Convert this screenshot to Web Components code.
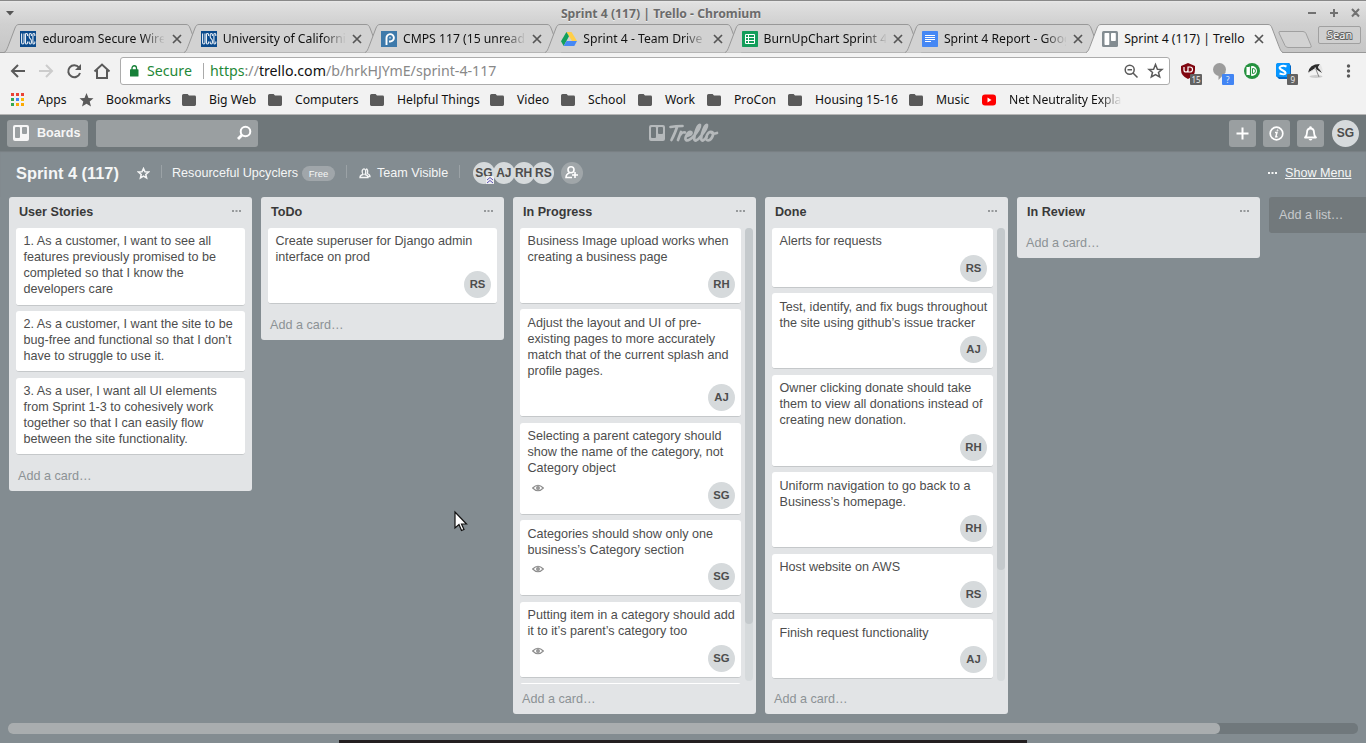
<!DOCTYPE html>
<html lang="en"><head><meta charset="utf-8"><title>Sprint 4 (117) | Trello</title>
<style>html,body{margin:0;width:1366px;height:743px;overflow:hidden;background:#838c91;font-family:"Liberation Sans",Arial,sans-serif}</style></head>
<body><desktop-window></desktop-window>
<script>
const define=(name,render)=>customElements.define(name,class extends HTMLElement{
  connectedCallback(){ if(this.shadowRoot) return;
    const t=document.createElement('template'); t.innerHTML=render(this);
    this.attachShadow({mode:'open'}).append(t.content.cloneNode(true)); }
});
const folder='<svg width="14" height="12" viewBox="0 0 14 12"><path d="M1.5 0H5.6L7 1.6H12.6A1.4 1.4 0 0 1 14 3V10.600A1.4 1.4 0 0 1 12.6 12H1.400A1.4 1.4 0 0 1 0 10.600V1.500A1.500 1.500 0 0 1 1.500 0Z" fill="#5a5a5a"/></svg>';
const ucsc='<svg width="16" height="16"><rect width="16" height="16" fill="#0a4a8c"/><g fill="none" stroke="#e8eef5" stroke-width="1.100"><path d="M1.600 2.500V11.500Q1.600 13 2.800 13T4 11.500V2.500M7.600 5V3.500Q7.600 2.500 6.500 2.500T5.500 3.500V12Q5.500 13 6.500 13T7.600 12V10.500M11.400 5V3.500Q11.400 2.500 10.300 2.500T9.200 4V5.500Q9.200 7 10.300 7.800T11.400 10V11.500Q11.400 13 10.300 13T9.200 11.500V10.500M14.800 5V3.500Q14.800 2.500 13.800 2.500T12.900 3.500V12Q12.900 13 13.800 13T14.800 12V10.500"/></g></svg>';
const favicons={ucsc,
 piazza:'<svg width="16" height="16"><rect width="16" height="16" fill="#3e7aab"/><path d="M5.500 14V7A3.700 3.700 0 1 1 9.200 10.500H8" fill="none" stroke="#fff" stroke-width="1.900"/><circle cx="9" cy="6.800" r="1" fill="#a8c9e2"/></svg>',
 drive:'<svg width="16" height="16" viewBox="0 0 16 16"><path d="M5.400 1H10.500L16 10H10.900Z" fill="#ffcf48"/><path d="M5.400 1L8 5.300L2.700 15L0 10.300Z" fill="#11a05d"/><path d="M5.500 10H16L13.300 15H2.700Z" fill="#4688f4"/></svg>',
 sheet:'<svg width="16" height="16"><rect width="16" height="16" rx=".7" fill="#129d5a"/><path d="M3.500 3.500H12.500V12.500H3.500ZM3 6.500H13M3 9.500H13M6.500 3V13" fill="none" stroke="#fff"/></svg>',
 doc:'<svg width="16" height="16"><rect width="16" height="16" rx=".7" fill="#4688f4"/><path d="M3 4.500H13M3 6.500H13M3 8.500H13M3 10.500H9" stroke="#fff"/></svg>',
 trello:'<svg width="16" height="16"><rect width="16" height="16" rx="1.500" fill="#838c91"/><rect x="2.500" y="2" width="4.800" height="12" rx=".7" fill="#fff"/><rect x="9" y="2" width="4.800" height="8" rx=".7" fill="#fff"/></svg>'};

define('browser-tab',e=>{const on=e.hasAttribute('active');return `<style>
:host{display:block;width:180.300px;height:29px;flex:none;position:relative;font:14px/20px "Noto Sans",sans-serif;color:#111}
.shape{position:absolute;left:-1px;top:0}
.row{position:relative;display:flex;height:29px;align-items:center;padding-left:15.400px}
.row>svg{flex:none}
.t{width:122px;margin-left:6px;white-space:nowrap;overflow:hidden;font-size:12.200px;padding-top:1px}
.fade{-webkit-mask:linear-gradient(90deg,#000 82%,transparent 101%);mask:linear-gradient(90deg,#000 82%,transparent 101%)}
.x{margin-left:7.500px}</style>
<svg class="shape" width="197" height="29"><path d="M0 28.500C2 28 3 25 4 22.500L11 4C12 1.500 13 .5 15 .5H182C184 .5 185 1.500 186 4L193 22.500C194 25 195 28 197 28.500" fill="${on?'#f2f2f2':'#d2d2d2'}" stroke="#989898"/>${on?'<path d="M1 28.500H196" stroke="#f2f2f2"/>':''}</svg>
<div class="row">${favicons[e.getAttribute('icon')]}<div class="t ${on?'':'fade'}"><slot></slot></div><svg class="x" width="10" height="10"><path d="M1 1L9 9M9 1L1 9" stroke="#555" stroke-width="1.700"/></svg></div>`});

define('window-title',()=>`<style>:host{display:flex;height:24px;background:linear-gradient(#888 0,#888 1px,#e8e8e8 1px,#e0e0e0 3px,#d0d0d0);align-items:center;position:relative}
span{flex:1;text-align:center;font:bold 12.200px/20px "Noto Sans",sans-serif;color:#6b6b6b;text-shadow:0 1px #eee;padding-top:3px}
svg{flex:none}</style><svg width="16" height="24"><path d="M6 11H14L10 15.500Z" fill="#555"/></svg><span>Sprint 4 (117) | Trello - Chromium</span>
<svg width="60" height="24" stroke="#717171" stroke-width="2" fill="none"><path d="M2 13H10M24 13H32M28 9V17M46 9L53 16.500M53 9L46 16.500"/></svg>`);

define('tab-strip',()=>`<style>:host{display:flex;height:29px;background:linear-gradient(#d0d0d0,#c6c6c6);position:relative;padding-left:5px}
:host:after{content:"";position:absolute;left:0;right:0;bottom:0;height:1px;background:#989898;z-index:0}
browser-tab{z-index:1}browser-tab[active]{z-index:2}
.end{position:relative;z-index:2;display:flex;margin-left:11px}
.sean{margin:2px 0 0 6px;width:41px;height:16px;border:1px solid #a0a0a0;border-radius:2px;background:#cfcfcf;font:11px/16px "Noto Sans",sans-serif;text-align:center;color:#fafafa;-webkit-text-stroke:2px #666;paint-order:stroke fill}</style>
<browser-tab icon="ucsc">eduroam Secure Wirele</browser-tab><browser-tab icon="ucsc">University of California</browser-tab><browser-tab icon="piazza">CMPS 117 (15 unread)</browser-tab><browser-tab icon="drive">Sprint 4 - Team Drive</browser-tab><browser-tab icon="sheet">BurnUpChart Sprint 4</browser-tab><browser-tab icon="doc">Sprint 4 Report - Goog</browser-tab><browser-tab icon="trello" active>Sprint 4 (117) | Trello</browser-tab>
<div class="end"><svg width="34" height="29"><path d="M2 7.500H25Q27 7.500 28 9.500L33 21.500Q34 23.500 32 23.500H10Q8 23.500 7 21.500L1 9Q.5 7.500 2 7.500Z" fill="#d2d2d2" stroke="#a0a0a0"/></svg><div class="sean">Sean</div></div>`);

define('address-bar',()=>`<style>:host{display:flex;height:35px;align-items:flex-start;padding:0 0 0 8px;box-sizing:border-box;background:#f2f2f2}
svg{flex:none;display:block}.nav{width:112px}
.url{display:flex;align-items:center;box-sizing:border-box;width:1050px;height:28px;border:1px solid #acacac;border-radius:3px;background:#fff;font:14.200px/26px "Noto Sans",sans-serif;color:#888;padding-left:9px;margin-top:4px}
.s{color:#1f8838;margin:0 10px 0 8px;width:46px;white-space:nowrap}.bar{width:1px;height:16px;background:#aaa;margin-right:6px}.u{flex:1}.u b{font-weight:400;color:#111}.u i{font-style:normal;color:#1f8838}
.ext{margin:9px 0 0 11px;font:8px "Noto Sans",sans-serif}</style>
<svg class="nav" width="112" height="35" fill="none" stroke="#5a5a5a" stroke-width="2"><path d="M17 18H4M10 12L4 18L10 24"/><path d="M31 18H44M38 12L44 18L38 24" stroke="#ccc"/><path d="M71 14.500A6 6 0 1 0 72 20"/><path d="M73 11V17H67Z" fill="#5a5a5a" stroke="none"/><path d="M86.500 18.500L94 11.500L101.500 18.500M89 17V25H99V17"/></svg>
<div class="url"><svg width="9" height="12"><rect y="4.300" width="8.500" height="7.200" rx=".6" fill="#178038"/><path d="M2 5V3A2.200 2.200 0 0 1 6.500 3V5" fill="none" stroke="#178038" stroke-width="1.300"/></svg><span class="s">Secure</span><span class="bar"></span><span class="u"><i>https</i>://<b>trello.com</b>/b/hrkHJYmE/sprint-4-117</span>
<svg width="45" height="26" fill="none" stroke="#5a5a5a" stroke-width="1.500"><circle cx="5.700" cy="11.700" r="4.500"/><path d="M9 15L13.500 19.500M3.500 11.700H8"/><path d="M31.500 6.500L33.400 11.200L38 11.400L34.500 14.400L35.700 19L31.500 16.500L27.300 19L28.500 14.400L25 11.400L29.600 11.200Z"/></svg></div>
<svg class="ext" width="180" height="25"><path d="M0 4L7 1L14 4V8Q14 14 7 17Q0 14 0 8Z" fill="#800610"/><path d="M3 5V8Q3 10 5 10T7 8V5M7 5V10H9Q11.500 10 11.500 7.500T9 5Z" stroke="#fff" fill="none" stroke-width="1.200"/><rect x="9" y="12" width="12" height="11" rx="1" fill="#626262"/><text x="10.500" y="20.500" fill="#eee">15</text>
<circle cx="38.500" cy="7.500" r="6.500" fill="#9c9c9c"/><path d="M37.500 12V18L45 10Z" fill="#9c9c9c"/><rect x="41" y="12" width="12" height="11" rx="1" fill="#4285f4"/><text x="45" y="20.500" fill="#eee">?</text>
<circle cx="71" cy="9" r="8" fill="#24913e"/><circle cx="71" cy="9" r="5" fill="#fff"/><rect x="65.500" y="5" width="4" height="8" fill="#fff"/><path d="M69.500 4V14" stroke="#24913e" stroke-width="1.200"/><path d="M71.500 6.500H72A2.500 2.500 0 0 1 72 11.500H71.500Z" fill="none" stroke="#24913e"/>
<path d="M97 1H108L110 4V17H98L95 14V3Z" fill="#0066c6"/><rect x="95" y="1" width="14" height="14" rx="2" fill="#0696ff"/><path d="M105.500 4.500Q102 3 99.500 4.500T101 8T104.500 11.500T98.500 11.500" fill="none" stroke="#fff" stroke-width="2"/><rect x="106" y="12" width="11" height="11" rx="1" fill="#626262"/><text x="109.500" y="20.500" fill="#eee">9</text>
<ellipse cx="135" cy="14.500" rx="6.500" ry="1.500" fill="#ccc"/><path d="M127 11Q128 2 139 2L137 5L141 11L134 6.500Z" fill="#2d2d2d"/><path d="M139 2Q141 4 142 10L137 6Z" fill="#e5e5e5"/><path d="M134 5L138 15" stroke="#888"/><path d="M127 11L132 8L135 6" stroke="#ddd"/>
<g fill="#5a5a5a"><circle cx="167.500" cy="4" r="1.700"/><circle cx="167.500" cy="9" r="1.700"/><circle cx="167.500" cy="14" r="1.700"/></g></svg>`);

const marks=[['apps',38,'Apps',11],['star',106,'Bookmarks',79],['',209,'Big Web',182],['',295,'Computers',268],['',397,'Helpful Things',370],['',517,'Video',490],['',588,'School',561],['',665,'Work',638],['',734,'ProCon',707],['',815,'Housing 15-16',788],['',936,'Music',909],['yt',1009,'Net Neutrality Expla',982]];
const apps='<svg width="13" height="13">'+['#ea4335','#ea4335','#ea4335','#34a853','#4285f4','#fbbc05','#34a853','#fbaa05','#fbaa05'].map((c,i)=>`<rect x="${i%3*5}" y="${Math.floor(i/3)*5}" width="3" height="3" fill="${c}"/>`).join('')+'</svg>';
define('bookmarks-bar',()=>`<style>:host{display:grid;grid-template-columns:${marks.map((m,i)=>(i<11?marks[i+1][3]-m[3]:147)+'px').join(' ')};height:27px;padding-left:11px;background:#f2f2f2;border-bottom:1px solid #b5b5b5;box-sizing:border-box;font:12.200px/18px "Noto Sans",sans-serif;color:#111}
div{display:flex;align-items:center;white-space:nowrap;padding-bottom:3px}div svg{flex:none;margin-right:auto}span{flex:none}.last span{letter-spacing:-.1px;-webkit-mask:linear-gradient(90deg,#000 76%,transparent 94%);mask:linear-gradient(90deg,#000 76%,transparent 94%)}</style>
${marks.map((m,i)=>`<div class="${m[0]=='yt'?'last':''}">${m[0]=='apps'?apps:m[0]=='star'?'<svg width="15" height="14"><path d="M7.500 0L9.500 5L14.500 5.300L10.700 8.500L12 13.500L7.500 10.800L3 13.500L4.300 8.500L.5 5.300L5.500 5Z" fill="#5a5a5a"/></svg>':m[0]=='yt'?'<svg width="15" height="12"><rect width="14" height="11" rx="3" y=".5" fill="#f00"/><path d="M5.500 3.500L9.500 6L5.500 8.500Z" fill="#fff"/></svg>':folder}<span style="width:${i<11?marks[i+1][3]-m[1]:120}px">${m[2]}</span></div>`).join('')}`);

const board='<svg width="16" height="16"><path fill-rule="evenodd" d="M2 0H14Q16 0 16 2V14Q16 16 14 16H2Q0 16 0 14V2Q0 0 2 0ZM3 2Q2 2 2 3V12Q2 13 3 13H6Q7 13 7 12V3Q7 2 6 2ZM10 2Q9 2 9 3V8Q9 9 10 9H13Q14 9 14 8V3Q14 2 13 2Z" fill="currentColor"/></svg>';
define('trello-header',()=>`<style>:host{display:flex;height:36px;box-sizing:border-box;background:#6f777a;align-items:center;padding:0 7px;color:#fff}
.b{display:flex;align-items:center;height:27px;width:81px;background:#9a9fa1;border-radius:3px;box-sizing:border-box;padding-left:6px;font:bold 12.600px/27px "Liberation Sans",Arial,sans-serif;color:#f6f6f6}.b span{margin-left:8px}.s{width:162px;height:27px;background:#9a9fa1;border-radius:3px;margin-left:8px;display:flex;align-items:center;justify-content:flex-end;box-sizing:border-box;padding-right:6px}
.logo{margin-left:391px;color:#b5b9bb;display:flex;align-items:center;margin-right:auto}.logo svg+svg{margin-left:3px}
.i{width:27px;height:27px;margin-left:7px;background:#9a9fa1;border-radius:3px}.av{width:27px;height:27px;border-radius:50%;background:#d6dadc;color:#4d4d4d;font:bold 12px/27px "Liberation Sans",Arial,sans-serif;text-align:center;margin-left:8px}.i svg{display:block}</style>
<div class="b">${board}<span>Boards</span></div><div class="s"><svg width="16" height="16" fill="none" stroke="#fff"><circle cx="9.500" cy="6.500" r="4.800" stroke-width="2"/><path d="M6 10L2 14" stroke-width="2.800"/></svg></div>
<div class="logo">${board}<svg width="51" height="23" viewBox="0 0 50 23" fill="none" stroke="currentColor" stroke-width="2.700" stroke-linecap="round" stroke-linejoin="round"><path d="M2 5Q7 4 14 4M8.500 5Q7 10 3 18"/><path d="M12.500 10L9.500 18M11.500 13Q14.500 9.500 16.500 10.500"/><path d="M18.500 14Q23.500 12.500 23 10.500Q21 8.500 18.500 12.500T17.500 18Q20 19.500 25.500 14"/><path d="M25.500 14Q32 6 31.500 3Q29.500 2 26.500 12Q24.500 19 27.500 18.500Q30 17.500 32.500 14Q39 6 38.500 3Q36.500 2 33.500 12Q31.500 19 34.500 18.500Q36 18 38 15"/><path d="M43.500 10Q40.500 9 38.500 13Q36.500 18.500 39.500 18.500Q43 18 44.500 13Q45 10 43 10Q43 12.500 48.500 11"/></svg></div>
<div class="i"><svg width="27" height="27"><path d="M7.500 13.500H19.500M13.500 7.500V19.500" stroke="#fff" stroke-width="2"/></svg></div>
<div class="i"><svg width="27" height="27" fill="none" stroke="#fff"><circle cx="13.500" cy="13.500" r="6.300" stroke-width="1.700"/><path d="M12 12.500H14L12.800 16.700H14.500" stroke-width="1.400"/><circle cx="14.500" cy="10.300" r=".5"/></svg></div>
<div class="i"><svg width="27" height="27"><path d="M8 17.500Q10 16 10 12.500Q10 8.500 13.500 8.500T17 12.500Q17 16 19 17.500Z" fill="none" stroke="#fff" stroke-width="1.800" stroke-linejoin="round"/><circle cx="13.500" cy="7.500" r="1.300" fill="#fff"/><path d="M11.500 19H15.500Q13.500 22 11.500 19Z" fill="#fff"/></svg></div><div class="av">SG</div>`);

define('board-header',()=>`<style>:host{display:flex;height:46px;box-sizing:border-box;align-items:center;padding:0 14.500px 2px 16px;color:#f5f6f6;font-size:12.600px;white-space:nowrap;box-shadow:inset 0 1px 1px #787f83}
h1{font-size:16.400px;line-height:20px;margin:0;width:121px}.star{width:13px;margin-right:11px}i{width:1px;height:13px;background:#9ba2a6;margin-top:-3px}
.free{height:15px;line-height:15px;background:#a0a6aa;border-radius:8px;font-size:9.500px;width:33px;text-align:center;margin:1px 11px 0 4px}.team{margin-left:11px;width:126px}
.m{width:22px;height:22px;border-radius:50%;background:#d6dadc;color:#4d4d4d;font:bold 12px/22px "Liberation Sans",Arial,sans-serif;text-align:center;margin-right:-2.200px;position:relative}.m svg{position:absolute;right:1px;bottom:0}
.add{width:22px;height:22px;background:#a0a6a9;border-radius:50%;margin-left:9px}u{margin-left:8px;text-underline-offset:1px}.d{margin-left:auto}svg{display:block}</style>
<h1>Sprint 4 (117)</h1><svg class="star" width="13" height="13"><path d="M6.500 1.500L8 4.800L11.500 5L8.800 7.400L9.600 11L6.500 9.200L3.400 11L4.200 7.400L1.500 5L5 4.800Z" fill="none" stroke="#f5f6f6" stroke-width="1.500"/></svg><i></i>
<span class="team" style="margin-left:10px">Resourceful Upcyclers</span><span class="free">Free</span><i></i>
<svg style="margin-left:12px" width="12" height="12" fill="none" stroke="#f5f6f6" stroke-width="1.300"><path d="M1 10.500Q1 8 4 7.500Q2.700 5 3.300 3.300Q5 .5 6.700 3.300Q7 5.500 6 7.500Q9 8 9 10.500ZM7 2Q9.500 2.500 8.300 6.500Q11 7.500 11 9.500H9"/></svg><span style="margin-left:6px;width:82px">Team Visible</span><i></i>
<span style="width:13px"></span><div class="m">SG<svg width="8" height="8" fill="none" stroke="#5a50b5"><rect width="8" height="8" fill="#eee" stroke="none"/><path d="M1 4L4 1.500L7 4M1 7L4 4.500L7 7"/></svg></div><div class="m">AJ</div><div class="m">RH</div><div class="m">RS</div><div class="add"><svg width="22" height="22" fill="none" stroke="#fff" stroke-width="1.600"><circle cx="10" cy="7.800" r="3"/><path d="M11 15.500H5Q5 12 8.500 11M14 10V16M11 13H17"/></svg></div>
<svg class="d" width="9" height="3" fill="#f5f6f6"><path d="M0 0H2V2H0ZM3.500 0H5.500V2H3.500ZM7 0H9V2H7Z"/></svg><u>Show Menu</u>`);

define('board-card',e=>{const w=e.getAttribute('who');return `<style>:host{display:block;flex:none;height:${e.getAttribute('lines')*16+12.6+(w?30.5:0)}px;border-bottom:1px solid #c5c8ca;margin-bottom:5.400px;background:#fff;border-radius:3px;position:relative;color:#4d4d4d;font-size:12.600px;line-height:16px;white-space:nowrap}
.text{padding:5.200px 0 0 7.500px}.f{display:flex;padding:5.800px 6px 0 11.500px;justify-content:space-between}.m{width:27px;height:27px;border-radius:50%;background:#d6dadc;font:bold 11.300px/27px "Liberation Sans",Arial,sans-serif;text-align:center;margin-left:auto}.eye{margin-top:2px}</style>
<div class="text"><slot></slot></div>${w?`<div class="f">${e.hasAttribute('watch')?'<svg class="eye" width="12" height="8" fill="none" stroke="#8c8c8c"><path d="M.7 4Q6 -1.500 11.300 4Q6 9.500 .7 4Z" stroke-width="1.200"/><circle cx="6" cy="4" r="1.200" stroke-width="1.500"/></svg>':''}<span class="m">${w}</span></div>`:''}`});

define('board-list',e=>{const s=e.getAttribute('scroll');return `<style>:host{display:flex;flex-direction:column;width:243px;height:${e.getAttribute('h')}px;flex:none;border-radius:3px;background:#e2e4e6;overflow:hidden}
header{display:flex;height:31px;flex:none;box-sizing:border-box;justify-content:space-between;padding:7px 11px 0 10px;font:bold 12.600px/16px "Liberation Sans",Arial,sans-serif;color:#393939}header svg{margin-top:6px}
.body{display:flex;flex:1;min-height:0;padding:0 3px 0 7px}.cards{flex:1;min-width:0;display:flex;flex-direction:column;overflow:hidden;margin:-.1px 4px 0 0}.bar{width:8px;height:453px;background:#d6dadc;border-radius:4px}.bar div{height:${s}px;background:#c4c9cc;border-radius:4px}
footer{height:30px;flex:none;box-sizing:border-box;padding:1px 0 0 9px;color:#8c9295;font-size:12.600px;line-height:29px}</style>
<header>${e.getAttribute('name')}<svg width="9" height="2" fill="#96999b"><path d="M0 0H2V2H0ZM3.500 0H5.500V2H3.500ZM7 0H9V2H7Z"/></svg></header><div class="body"><div class="cards"><slot></slot></div>${s?'<div class="bar"><div></div></div>':''}</div><footer>Add a card…</footer>`});

const lists=[
 ['User Stories',294,0,[['1. As a customer, I want to see all|features previously promised to be|completed so that I know the|developers care'],['2. As a customer, I want the site to be|bug-free and functional so that I don’t|have to struggle to use it.'],['3. As a user, I want all UI elements|from Sprint 1-3 to cohesively work|together so that I can easily flow|between the site functionality.']]],
 ['ToDo',143,0,[['Create superuser for Django admin|interface on prod','RS']]],
 ['In Progress',517,396,[['Business Image upload works when|creating a business page','RH'],['Adjust the layout and UI of pre-|existing pages to more accurately|match that of the current splash and|profile pages.','AJ'],['Selecting a parent category should|show the name of the category, not|Category object','SG',1],['Categories should show only one|business’s Category section','SG',1],['Putting item in a category should add|it to it’s parent’s category too','SG',1],['']]],
 ['Done',517,342,[['Alerts for requests','RS'],['Test, identify, and fix bugs throughout|the site using github’s issue tracker','AJ'],['Owner clicking donate should take|them to view all donations instead of|creating new donation.','RH'],['Uniform navigation to go back to a|Business’s homepage.','RH'],['Host website on AWS','RS'],['Finish request functionality','AJ']]],
 ['In Review',61,0,[]]];
define('board-canvas',()=>`<style>:host{display:flex;gap:9px;align-items:flex-start;padding-left:9px;height:517px;overflow:hidden}.new{flex:none;width:243px;height:36px;box-sizing:border-box;padding-left:10px;background:#72797c;border-radius:3px;color:#c7cacc;font-size:12.600px;line-height:36px}</style>
${lists.map(l=>`<board-list name="${l[0]}" h="${l[1]}" ${l[2]?`scroll="${l[2]}"`:''}>${l[3].map(c=>`<board-card lines="${c[0].split('|').length}" ${c[1]?`who="${c[1]}"`:''} ${c[2]?'watch':''}>${c[0].replaceAll('|','<br>')}</board-card>`).join('')}</board-list>`).join('')}<div class="new">Add a list…</div>`);

define('board-scrollbar',()=>`<style>:host{display:block;padding:9px 8px 0;height:32px;box-sizing:border-box;position:relative}.t{height:11px;border-radius:5px;background:#70787c}.t div{width:1212px;height:11px;border-radius:5px;background:#a9adaf}.dock{position:absolute;left:339px;width:688px;top:26px;height:3px;background:#231f20}</style><div class="t"><div></div></div><div class="dock"></div>`);

define('desktop-window',()=>`<style>:host{display:flex;flex-direction:column;width:1366px;height:743px;overflow:hidden;background:#838c91;position:relative}:host>*{flex:none}.cur{position:absolute;left:452.500px;top:510px}</style>
<window-title></window-title><tab-strip></tab-strip><address-bar></address-bar><bookmarks-bar></bookmarks-bar><trello-header></trello-header><board-header></board-header><board-canvas></board-canvas><board-scrollbar></board-scrollbar>
<svg class="cur" width="18" height="24"><path d="M2 2V18L6 14.500L8.500 20.500L11 19.500L8.500 14H13.500Z" fill="#fff" stroke="#111" stroke-width="1.200"/></svg>`);
</script></body></html>
